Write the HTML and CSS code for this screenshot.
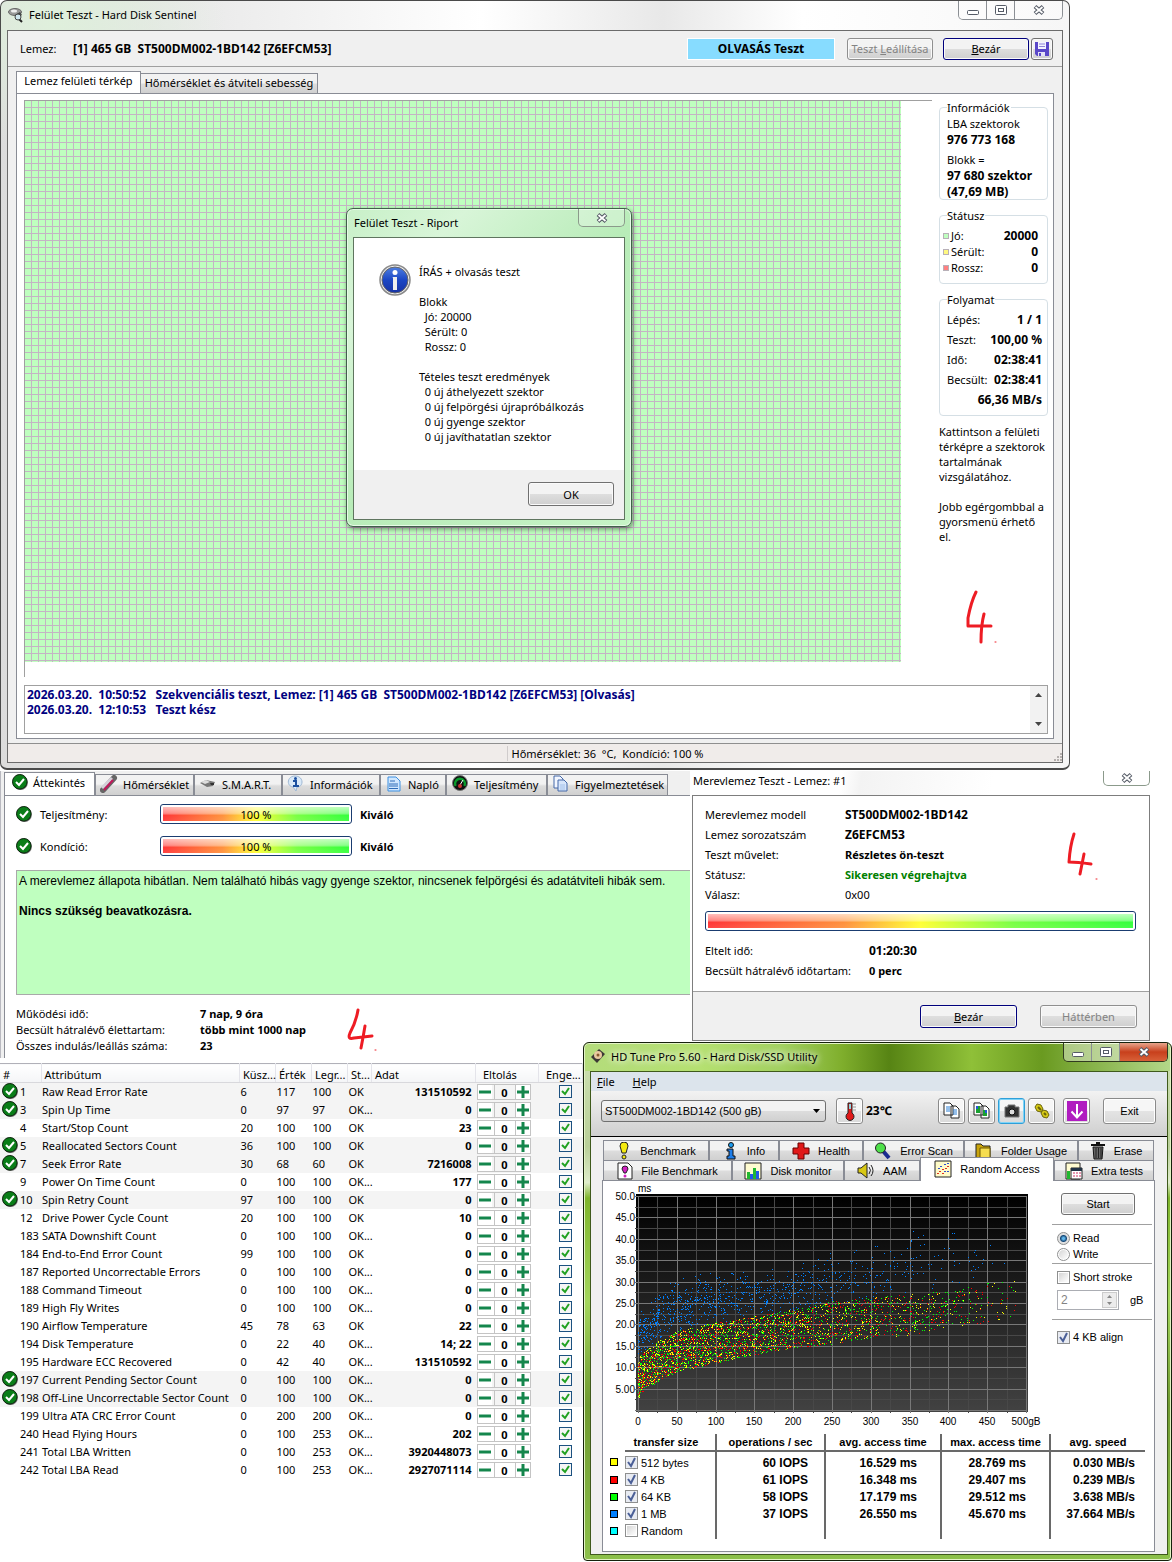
FILE: index.html
```html
<!DOCTYPE html>
<html lang="hu">
<head>
<meta charset="utf-8">
<title>Felület Teszt - Hard Disk Sentinel</title>
<link rel="stylesheet" href="styles.css">
</head>
<body>
<svg class="defs" aria-hidden="true">
  <symbol id="ok" viewBox="0 0 16 16"><circle cx="8.600" cy="8.800" r="7.200" fill="#777"/><circle cx="7.800" cy="7.800" r="7.300" fill="#0a7d18" stroke="#0b1f0b"/><path d="M4 8l3 3 5-6" fill="none" stroke="#fff" stroke-width="2"/></symbol>
  <symbol id="x" viewBox="0 0 12 10"><path d="M2 1.500l8 7M10 1.500l-8 7" stroke="#555b66" stroke-width="4"/><path d="M2.500 2l7 6M9.500 2l-7 6" stroke="#fff" stroke-width="1.800"/></symbol>
  <symbol id="min" viewBox="0 0 12 10"><rect x=".5" y="5.500" width="11" height="4" rx="1" fill="#fff" stroke="#555b66"/></symbol>
  <symbol id="max" viewBox="0 0 12 10"><rect x=".5" y=".5" width="11" height="9" rx="1" fill="#fff" stroke="#555b66"/><rect x="3.500" y="3.500" width="5" height="3" fill="#fff" stroke="#555b66"/></symbol>
  <symbol id="disk" viewBox="0 0 16 16"><ellipse cx="7" cy="5" rx="6.500" ry="3.500" fill="#999" stroke="#666"/><ellipse cx="6" cy="4" rx="3" ry="1.500" fill="#eee"/><path d="M7 8l5-3 2 3-3 2z" fill="#444"/></symbol>
</svg>

<main class="desktop">
<section class="win sentinel">
  <header class="titlebar">
    <svg width="16" height="16"><use href="#disk"/><path d="M9 10l5 5" stroke="#222" stroke-width="2"/><circle cx="10" cy="10" r="3" fill="#cfe6ef" stroke="#444"/></svg>
    <h1>Felület Teszt - Hard Disk Sentinel</h1>
    <div class="caption">
      <button aria-label="Minimize"><svg width="12" height="10"><use href="#min"/></svg></button>
      <button aria-label="Maximize"><svg width="12" height="10"><use href="#max"/></svg></button>
      <button class="wide" aria-label="Close"><svg width="12" height="10"><use href="#x"/></svg></button>
    </div>
  </header>
  <div class="client">
    <div class="diskbar">
      <span class="lbl">Lemez:</span><b class="pre">[1] 465 GB  ST500DM002-1BD142 [Z6EFCM53]</b>
      <b class="mode">OLVASÁS Teszt</b>
      <button class="btn" disabled>Teszt <u>L</u>eállítása</button>
      <button class="btn primary"><u>B</u>ezár</button>
      <button class="btn save" aria-label="Mentés"><svg width="16" height="16"><path d="M1 1h14v14H3l-2-2z" fill="#5a48c8"/><path d="M4 1h8v7H4z" fill="#f4f4ff"/><path d="M5 3h6M5 5.500h6" stroke="#8f86d8"/><path d="M4 11h7v4H4z" fill="#e4e2f6"/><path d="M5 12h2v3H5z" fill="#5a48c8"/></svg></button>
    </div>
    <div class="tabs main-tabs"><button class="tab on">Lemez felületi térkép</button><button class="tab">Hőmérséklet és átviteli sebesség</button></div>
    <div class="page">
      <div class="map-row">
        <div class="map"><div class="blocks"></div>
          <section class="report">
            <header><h2>Felület Teszt - Riport</h2><button class="xbtn" aria-label="Close"><svg width="12" height="10"><use href="#x"/></svg></button></header>
            <div class="report-client">
              <div class="report-msg">
                <svg width="32" height="32" viewBox="0 0 32 32"><defs><linearGradient id="bl" x2="0" y2="1"><stop stop-color="#4f7fe0"/><stop offset=".5" stop-color="#1b46c4"/><stop offset="1" stop-color="#1733a4"/></linearGradient></defs><circle cx="16" cy="16" r="15" fill="#f2f2f2" stroke="#888" stroke-width="1.500"/><circle cx="16" cy="16" r="13" fill="url(#bl)" stroke="#666"/><circle cx="16" cy="8.500" r="2.500" fill="#fff"/><path d="M13.500 13h4.500v13h-4V14z" fill="#eee"/></svg>
                <p class="pre">ÍRÁS + olvasás teszt

Blokk
  Jó: 20000
  Sérült: 0
  Rossz: 0

Tételes teszt eredmények
  0 új áthelyezett szektor
  0 új felpörgési újrapróbálkozás
  0 új gyenge szektor
  0 új javíthatatlan szektor</p>
              </div>
              <footer><button class="btn ok">OK</button></footer>
            </div>
          </section>
        </div>
        <aside class="side">
          <fieldset class="info"><legend>Információk</legend>LBA szektorok<br><b>976 773 168</b><div class="blk">Blokk =<br><b>97 680 szektor<br>(47,69 MB)</b></div></fieldset>
          <fieldset class="status"><legend>Státusz</legend>
            <div class="kv"><i class="sw good"></i>Jó:<b>20000</b></div>
            <div class="kv"><i class="sw weak"></i>Sérült:<b>0</b></div>
            <div class="kv"><i class="sw bad"></i>Rossz:<b>0</b></div></fieldset>
          <fieldset class="progress"><legend>Folyamat</legend>
            <div class="kv">Lépés:<b>1 / 1</b></div><div class="kv">Teszt:<b>100,00 %</b></div><div class="kv">Idő:<b>02:38:41</b></div><div class="kv">Becsült:<b>02:38:41</b></div><div class="kv"><b>66,36 MB/s</b></div></fieldset>
          <p>Kattintson a felületi<br>térképre a szektorok<br>tartalmának<br>vizsgálatához.</p>
          <p>Jobb egérgombbal a<br>gyorsmenü érhető<br>el.</p>
          <svg class="hand" width="32" height="56" viewBox="0 0 32 56"><path d="M10 2Q5 12 2 28v8l8 0 15 0M18 24Q15 35 15 52" /><path class="dot" d="M29 52h1"/></svg>
        </aside>
      </div>
      <div class="log"><textarea readonly aria-label="Napló">2026.03.20.  10:50:52   Szekvenciális teszt, Lemez: [1] 465 GB  ST500DM002-1BD142 [Z6EFCM53] [Olvasás]
2026.03.20.  12:10:53   Teszt kész</textarea>
        <div class="scroll"><button aria-label="Fel"><svg width="7" height="4"><path d="M0 4l3.500-4L7 4z" fill="#444"/></svg></button><button aria-label="Le"><svg width="7" height="4"><path d="M0 0h7L3.500 4z" fill="#444"/></svg></button></div></div>
    </div>
    <footer class="statusbar"><span class="pre">Hőmérséklet: 36  °C,  Kondíció: 100 %</span><svg width="10" height="10"><path d="M8 2h2M8 5h2M8 8h2M5 5h2M5 8h2M2 8h2" stroke="#b5b0ae" stroke-width="2"/></svg></footer>
  </div>
</section>

<div class="middle">
<section class="overview">
  <div class="tabs ov-tabs">
    <button class="tab on"><svg width="16" height="16"><use href="#ok"/></svg>Áttekintés</button>
    <button class="tab"><svg width="18" height="18"><path d="M3 15L14 3" stroke="#666" stroke-width="6" stroke-linecap="round"/><path d="M2 13L12 3" stroke="#d4d0d8" stroke-width="3"/><path d="M4 15L13 5" stroke="#c2185b" stroke-width="2"/></svg>Hőmérséklet</button>
    <button class="tab"><svg width="18" height="16"><path d="M1 7l6-3 9 2-2 4-6 1z" fill="#777"/><path d="M2 6l5-2 4 2-5 2z" fill="#ddd"/><path d="M11 7h4v2h-3z" fill="#333"/></svg>S.M.A.R.T.</button>
    <button class="tab"><svg width="18" height="18"><path d="M8 1c9 0 9 11 2 11l-1 4-3-4C-1 11 0 1 8 1z" fill="#d9e9f8" stroke="#9fb8d4"/><path d="M6 6h3v5M6 11h6" fill="none" stroke="#1a4fa0" stroke-width="2"/><circle cx="8.500" cy="3.500" r="1.500" fill="#1a4fa0"/></svg>Információk</button>
    <button class="tab"><svg width="18" height="16"><path d="M3 1h8l4 4v10H3z" fill="#cfe7ff" stroke="#3d8fe0"/><path d="M5 5h5M4 8h9M4 10h9M4 12.500h9" stroke="#2f6db8"/></svg>Napló</button>
    <button class="tab"><svg width="18" height="18"><circle cx="9" cy="8" r="7.500" fill="#111" stroke="#777"/><path d="M4.500 11a5 5 0 1 1 9 0" fill="none" stroke="#0a9c2c" stroke-width="2.500"/><path d="M9 10l3-5" stroke="#fff"/><circle cx="9" cy="11" r="2" fill="#c33"/></svg>Teljesítmény</button>
    <button class="tab"><svg width="18" height="18"><path d="M2 1h6l3 3v9H2z" fill="#f2f6ff" stroke="#4468a8"/><path d="M6 5h6l3 3v8H6z" fill="#d6e5fb" stroke="#4468a8"/><path d="M8 10h5M8 12h5M8 14h5" stroke="#a5c2ea"/></svg>Figyelmeztetések</button>
  </div>
  <div class="ov-body">
    <div class="health"><svg width="16" height="16"><use href="#ok"/></svg><span>Teljesítmény:</span><div class="bar">100 %</div><b>Kiváló</b></div>
    <div class="health"><svg width="16" height="16"><use href="#ok"/></svg><span>Kondíció:</span><div class="bar">100 %</div><b>Kiváló</b></div>
    <div class="verdict"><p>A merevlemez állapota hibátlan. Nem található hibás vagy gyenge szektor, nincsenek felpörgési és adatátviteli hibák sem.</p><b>Nincs szükség beavatkozásra.</b></div>
    <dl class="stats"><dt>Működési idő:</dt><dd>7 nap, 9 óra</dd><dt>Becsült hátralévő élettartam:</dt><dd>több mint 1000 nap</dd><dt>Összes indulás/leállás száma:</dt><dd>23</dd></dl>
    <svg class="hand mark-ov" width="32" height="48" viewBox="0 0 32 48"><path d="M11 2Q9 14 3 25q-3 7 4 5l18-2M18 18q-2 12-4 22"/><path class="dot" d="M28 42h1"/></svg>
  </div>
</section>
<section class="selftest">
  <header><h2>Merevlemez Teszt - Lemez: #1</h2><button class="xbtn" aria-label="Close"><svg width="12" height="10"><use href="#x"/></svg></button></header>
  <div class="st-client">
    <dl class="st-list"><dt>Merevlemez modell</dt><dd class="code">ST500DM002-1BD142</dd><dt>Lemez sorozatszám</dt><dd class="code">Z6EFCM53</dd><dt>Teszt művelet:</dt><dd>Részletes ön-teszt</dd><dt>Státusz:</dt><dd class="done">Sikeresen végrehajtva</dd><dt>Válasz:</dt><dd class="plain">0x00</dd></dl>
    <div class="bar"></div>
    <dl class="st-list st-time"><dt>Eltelt idő:</dt><dd class="code">01:20:30</dd><dt>Becsült hátralévő időtartam:</dt><dd>0 perc</dd></dl>
    <footer><button class="btn primary"><u>B</u>ezár</button><button class="btn" disabled>Háttérben</button></footer>
    <svg class="hand mark-st" width="32" height="50" viewBox="0 0 32 50"><path d="M7 2Q3 14 2 30q8 0 22 2M17 22l-4 20"/><path class="dot" d="M29 47h1"/></svg>
  </div>
</section>
</div>

<div class="bottom">
<table class="smart">
  <colgroup><col class="c-id"><col><col class="c-num"><col class="c-num"><col class="c-num"><col class="c-st"><col class="c-data"><col class="c-off"><col class="c-en"></colgroup>
  <thead><tr><th>#</th><th>Attribútum</th><th>Küsz...</th><th>Érték</th><th>Legr...</th><th>St...</th><th>Adat</th><th class="in">Eltolás</th><th class="in">Enge...</th></tr></thead>
  <tbody id="smart"></tbody>
</table>

<section class="hdtune">
  <header class="ht-title"><svg width="16" height="16"><path d="M1 9l8-8 6 5-8 9z" fill="#3c3835"/><circle cx="8" cy="7" r="4" fill="#e8c9a0"/><circle cx="8" cy="7" r="1.500" fill="#8a5a30"/></svg><h2>HD Tune Pro 5.60 - Hard Disk/SSD Utility</h2>
    <div class="caption"><button aria-label="Minimize"><svg width="12" height="10"><use href="#min"/></svg></button><button aria-label="Maximize"><svg width="12" height="10"><use href="#max"/></svg></button><button class="wide red" aria-label="Close"><svg width="12" height="10"><use href="#x"/></svg></button></div></header>
  <div class="ht-client">
    <nav class="menu"><a href="#file"><u>F</u>ile</a><a href="#help"><u>H</u>elp</a></nav>
    <div class="toolbar">
      <select class="drive" aria-label="Drive"><option>ST500DM002-1BD142 (500 gB)</option></select>
      <button class="tool" aria-label="Temperature"><svg width="16" height="20"><path d="M6 2h4v10a4 4 0 1 1-4 0z" fill="#e01818" stroke="#222"/><path d="M7 3h2v5H7z" fill="#8fd6e0"/><path d="M11 3h3M11 6h3M11 9h3" stroke="#999"/></svg></button>
      <b class="temp">23℃</b>
      <button class="tool push" aria-label="Copy"><svg width="18" height="18"><path d="M1 1h6l3 3v9H1zM8 4h5l3 3v9H8z" fill="#fff" stroke="#222"/><path d="M3 5h4M3 7h4M3 9h4M10 8h4M10 10h4M10 12h4" stroke="#2a7fd4"/></svg></button>
      <button class="tool" aria-label="Copy image"><svg width="18" height="18"><path d="M1 1h6l3 3v9H1zM8 4h5l3 3v9H8z" fill="#fff" stroke="#222"/><path d="M3 4h4v7H3zM10 8h4v6h-4z" fill="#18a030"/><path d="M3 4h2v3H3zM12 8h2v3h-2z" fill="#2458d8"/></svg></button>
      <button class="tool focus" aria-label="Screenshot"><svg width="18" height="18"><path d="M2 5h3V3h7v2h4v10H2z" fill="#333" stroke="#777"/><circle cx="9" cy="10" r="3" fill="#ddd" stroke="#111"/></svg></button>
      <button class="tool" aria-label="Options"><svg width="18" height="18"><path d="M2 5l2-3 4 1 2 4-2 3-4-1zM8 11l2-3 4 1 2 4-2 3-4-1z" fill="#d6c914" stroke="#6b640a"/><path d="M5 5l3 3M11 11l2 2" stroke="#6b640a" stroke-width="2"/></svg></button>
      <button class="tool gap" aria-label="Save"><svg width="20" height="20"><path d="M0 0h20v20H0z" fill="#b01cc0"/><path d="M10 3v13M4.500 10.500l5.500 6 5.500-6" fill="none" stroke="#fff" stroke-width="2"/></svg></button>
      <button class="tool exit">Exit</button>
    </div>
    <div class="ht-body">
      <div class="httabs row1">
        <button class="tab"><svg width="16" height="18"><path d="M4 4a4 4 0 0 1 8 0l-2 7H6z" fill="#f4ea10" stroke="#222"/><circle cx="8" cy="15" r="2" fill="#f4ea10" stroke="#222"/></svg>Benchmark</button>
        <button class="tab"><svg width="16" height="18"><circle cx="8" cy="3" r="2.500" fill="#1c9cf0" stroke="#111"/><path d="M4 7h6v7h2v3H4v-3h2V9H4z" fill="#1c7ce8" stroke="#111"/></svg>Info</button>
        <button class="tab"><svg width="18" height="18"><path d="M6 1h6v5h5v6h-5v5H6v-5H1V6h5z" fill="#e01818" stroke="#600"/></svg>Health</button>
        <button class="tab"><svg width="18" height="18"><path d="M9 9l6 7" stroke="#1c2c90" stroke-width="4"/><circle cx="6.500" cy="6" r="5" fill="#4fe04a" stroke="#222"/></svg>Error Scan</button>
        <button class="tab"><svg width="18" height="18"><path d="M1 2h5l2 2h7v12H1z" fill="#c9a40c" stroke="#222"/><path d="M5 6h10v10H5z" fill="#f5dd50" stroke="#6a5600"/></svg>Folder Usage</button>
        <button class="tab"><svg width="16" height="18"><path d="M1 3h14M6 1h4" stroke="#111" stroke-width="2"/><path d="M3 5h10l-1 12H4z" fill="#666" stroke="#111"/><path d="M6 6v10M8.500 6v10M11 6v10" stroke="#222"/></svg>Erase</button>
      </div>
      <div class="httabs row2">
        <button class="tab"><svg width="16" height="18"><path d="M1 1h10l4 4v12H1z" fill="#fff" stroke="#222"/><path d="M5 7a3 3 0 0 1 6 0l-2 4H7z" fill="#d020c0" stroke="#222"/><circle cx="8" cy="14" r="1.500" fill="#d020c0"/></svg>File Benchmark</button>
        <button class="tab"><svg width="18" height="18"><path d="M1 1h16v16H1z" fill="#fffbd0" stroke="#222"/><path d="M3 10h3v7H3zM9 6h3v11H9z" fill="#20b830"/><path d="M6 12h3v5H6zM12 9h3v8h-3z" fill="#2458e8"/></svg>Disk monitor</button>
        <button class="tab"><svg width="18" height="18"><path d="M1 6h3l6-5v15l-6-5H1z" fill="#d8c814" stroke="#222"/><path d="M12 5q3 3 0 7M14 3q4 6 0 11" fill="none" stroke="#222"/></svg>AAM</button>
        <button class="tab on"><svg width="18" height="18"><path d="M1 1h16v16H1z" fill="#fffbc8" stroke="#222"/><path d="M3 13.500h2M5 11.500h2M8 9.500h2M8 13.500h2M11 8.500h2M13 6.500h2" stroke="#e03020"/><path d="M4 8.500h2M10 4.500h2M13 11.500h2M10 11.500h2M13 3.500h2M6 6.500h2" stroke="#3050d0"/></svg>Random Access</button>
        <button class="tab"><svg width="18" height="18"><path d="M1 1h14v16H1z" fill="#fffbd0" stroke="#222"/><path d="M2 9h3v8H2z" fill="#20b830"/><path d="M6 6h11v11H6z" fill="#fff" stroke="#222"/><path d="M6 6h11v3H6z" fill="#234"/><path d="M8 11h8M8 14h8" stroke="#d03060" stroke-dasharray="2 1"/></svg>Extra tests</button>
      </div>
      <div class="ht-page">
        <div class="ht-top">
          <svg id="chart" class="chart" width="445" height="252" viewBox="603 1181 445 252" role="img" aria-label="Random access"></svg>
          <div class="opts">
            <button class="btn start">Start</button>
            <hr>
            <label><input type="radio" name="rw" checked>Read</label>
            <label><input type="radio" name="rw">Write</label>
            <hr>
            <label class="ss"><input type="checkbox">Short stroke</label>
            <div class="spin"><span><input type="text" value="2" disabled aria-label="Short stroke size"><i class="arrows"><svg width="5" height="3"><path d="M0 3l2.500-3L5 3z" fill="#888"/></svg><svg width="5" height="3"><path d="M0 0h5L2.500 3z" fill="#888"/></svg></i></span>gB</div>
            <hr>
            <label class="al"><input type="checkbox" checked>4 KB align</label>
          </div>
        </div>
        <table class="results">
          <colgroup><col class="r0"><col class="r1"><col class="r2"><col class="r3"><col class="r2"><col></colgroup>
          <thead><tr><td></td><th>transfer size</th><th>operations / sec</th><th>avg. access time</th><th>max. access time</th><th>avg. speed</th></tr></thead>
          <tbody>
            <tr><td><i class="key y"></i></td><td><label><input type="checkbox" checked>512 bytes</label></td><td>60 IOPS</td><td>16.529 ms</td><td>28.769 ms</td><td>0.030 MB/s</td></tr>
            <tr><td><i class="key r"></i></td><td><label><input type="checkbox" checked>4 KB</label></td><td>61 IOPS</td><td>16.348 ms</td><td>29.407 ms</td><td>0.239 MB/s</td></tr>
            <tr><td><i class="key g"></i></td><td><label><input type="checkbox" checked>64 KB</label></td><td>58 IOPS</td><td>17.179 ms</td><td>29.512 ms</td><td>3.638 MB/s</td></tr>
            <tr><td><i class="key b"></i></td><td><label><input type="checkbox" checked>1 MB</label></td><td>37 IOPS</td><td>26.550 ms</td><td>45.670 ms</td><td>37.664 MB/s</td></tr>
            <tr><td><i class="key c"></i></td><td><label><input type="checkbox">Random</label></td><td></td><td></td><td></td><td></td></tr>
          </tbody>
        </table>
      </div>
    </div>
  </div>
</section>
</div>
</main>
<script src="app.js"></script>
</body>
</html>
```
FILE: styles.css
```css
* { box-sizing: border-box; }
body { margin: 0; background: #fff; color: #000; font: 11px/15px "Noto Sans", "Open Sans", sans-serif; }
h1, h2, p, dl, dd, fieldset { margin: 0; padding: 0; font-size: inherit; font-weight: normal; }
button, input, select, textarea { font: inherit; color: inherit; margin: 0; padding: 0; }
svg { display: block; flex: none; }
.defs { position: absolute; width: 0; height: 0; }
.pre { white-space: pre; }
.desktop { min-width: 1100px; overflow: hidden; }

/* shared controls */
.btn { height: 22px; border: 1px solid #707070; border-radius: 3px; background: linear-gradient(#f3f3f3 0 48%, #dedede 50%, #cfcfcf); white-space: nowrap; box-shadow: inset 0 0 0 1px #fafafa; }
.btn:disabled { color: #838383; border-color: #8f8f8f; }
.btn.primary { border-color: #00007c; }
.caption { display: flex; align-self: flex-start; margin-left: auto; height: 19px; border: 1px solid #8b8f94; border-top: 0; border-radius: 0 0 5px 5px; overflow: hidden; }
.caption button { width: 28px; border: 0; border-right: 1px solid #8b8f94; background: #ffffff66; display: grid; place-items: center; }
.caption .wide { width: 47px; border-right: 0; }
.xbtn { width: 47px; height: 18px; border: 1px solid #8b9a8b; border-top: 0; border-radius: 0 0 5px 5px; background: #ffffff44; display: grid; place-items: center; align-self: flex-start; margin-left: auto; }
.tabs { display: flex; align-items: flex-end; }
.tab { border: 1px solid #898c95; background: linear-gradient(#f2f2f2 0 45%, #dcdcdc 55%, #d0d0d0); white-space: nowrap; }
.tab.on { background: #fff; border-bottom-color: #fff; }
.bar { height: 20px; border: 1px solid #1a3c70; border-radius: 3px; padding: 2px; text-align: center; line-height: 15px; background: linear-gradient(#ffffffb0 0, #ffffff70 45%, #ffffff10 60%, #ffffff20 100%) content-box, linear-gradient(90deg, #ff2a2a, #ff8a30 32%, #ffff28 50%, #70ff38 72%, #28ff30) content-box #fff; }
.hand { fill: none; stroke: #ee1c24; stroke-width: 3; stroke-linecap: round; stroke-linejoin: round; }
.hand .dot { stroke-width: 1; }

/* surface test window */
.sentinel { margin-right: 102px; height: 770px; border: 1px solid #4a4a4a; border-bottom-width: 2px; border-radius: 7px; padding: 0 6px 5px 6px; background: radial-gradient(ellipse at 5% 3%, #dff0dc, transparent 12%), linear-gradient(90deg, #dcdcdc, #efefef 25%, #fff 45%, #e8e8e8 62%, #fff 75%, #f6f6f6); display: flex; flex-direction: column; }
.titlebar { display: flex; height: 29px; align-items: center; gap: 5px; padding: 0 0 2px 1px; }
.client { flex: 1; display: flex; flex-direction: column; border: 1px solid #6b6b6b; background: #f0f0f0; }
.diskbar { display: flex; align-items: center; height: 36px; padding: 0 9px 0 12px; border-bottom: 1px solid #a0a0a0; }
.diskbar b { font-size: 12px; }
.diskbar .lbl { width: 53px; }
.mode { margin-left: auto; margin-right: 12px; width: 148px; line-height: 20px; text-align: center; background: #87dcff; border: 1px solid #fff; }
.diskbar .btn { width: 86px; margin-right: 10px; }
.diskbar .primary { margin-right: 2px; }
.diskbar .save { width: 22px; margin-right: 0; padding-left: 2px; }
.main-tabs { padding: 4px 8px 0; }
.main-tabs .tab { height: 20px; width: 177px; padding-bottom: 2px; border-bottom: 0; border-left: 0; }
.main-tabs .on { width: 125px; height: 22px; padding-bottom: 4px; border-left: 1px solid #898c95; }
.page { flex: 1; margin: 0 8px 4px; border: 1px solid #898c95; background: #fff; padding: 6px 5px 4px 7px; display: flex; flex-direction: column; gap: 8px; }
.map-row { flex: 1; display: flex; gap: 7px; }
.map { position: relative; flex: 1; border: 1px solid #a0a0a0; border-width: 1px 0 0 1px; }
.blocks { height: 561px; margin-right: 31px; background: repeating-linear-gradient(90deg, transparent 0 6px, #c4b4c4 6px 7px), repeating-linear-gradient(#bfffbf 0 6px, #c4b4c4 6px 7px); }
.side { width: 109px; }
.side fieldset { border: 1px solid #d5dfe5; border-radius: 4px; padding: 1px 5px 0 7px; line-height: 16px; }
.side b { font-size: 12px; }
.side legend { line-height: 15px; padding: 0 1px 0 0; }
.info { height: 100px; }
.blk { margin-top: 4px; white-space: nowrap; }
.side .status { height: 76px; margin-top: 8px; padding: 5px 9px 0 3px; }
.status legend { margin-left: 4px; }
.side .progress { height: 124px; margin-top: 8px; padding-top: 3px; }
.progress .kv { line-height: 20px; }
.kv { display: flex; align-items: center; white-space: nowrap; }
.kv b { margin-left: auto; }
.sw { width: 6px; height: 6px; border: 1px solid #b8b0b8; margin-right: 2px; }
.good { background: #bfffbf; } .weak { background: #fff880; } .bad { background: #ff8080; }
.side p { margin: 8px 0 15px; white-space: nowrap; }
.side .hand { margin: 46px 0 0 27px; }
.side p + p { margin-top: 0; }
.log { display: flex; height: 49px; border: 1px solid #a0a0a0; }
.log textarea { flex: 1; border: 0; resize: none; overflow: hidden; padding: 1px 2px; font-size: 12px; font-weight: bold; color: #000080; background: #fff; outline: 0; }
.scroll { width: 17px; background: #f2f2f2; display: flex; flex-direction: column; justify-content: space-between; }
.scroll button { height: 18px; border: 0; background: none; display: grid; place-items: center; }
.statusbar { height: 19px; border-top: 1px solid #8f8f8f; background: #f0ecea; display: flex; align-items: center; justify-content: space-between; padding-left: 47.300%; }
.statusbar span { border-left: 1px solid #d0cccc; padding-left: 4px; }
.statusbar svg { align-self: flex-end; }

/* report box lies over the block map */
.report { position: absolute; left: 321px; top: 107px; width: 286px; height: 319px; border: 1px solid #40604a; border-radius: 7px; background: linear-gradient(135deg, #c8f0c8, #d8f5d8 20%, #b8ecb8 50%, #c6f3c6); box-shadow: inset 0 0 0 1px #e6fbe6, 1px 2px 5px #00000077; padding: 0 6px 6px; display: flex; flex-direction: column; }
.report header { display: flex; height: 28px; align-items: center; padding: 0 0 2px 1px; }
.report-client { flex: 1; border: 1px solid #5f755f; background: #fff; display: flex; flex-direction: column; }
.report-msg { flex: 1; display: flex; gap: 8px; padding: 26px 0 0 25px; }
.report footer { height: 49px; background: #f0f0f0; display: flex; justify-content: flex-end; padding: 12px 10px; }
.report .ok { width: 86px; height: 24px; }

/* overview and self test */
.middle { display: grid; grid-template-columns: 690fr 482fr; height: 291px; padding-top: 1px; }
.overview { height: 287px; border-left: 1px solid #b9b9c0; padding-left: 3px; background: #f0f0f0; display: flex; flex-direction: column; min-width: 0; }
.ov-tabs { height: 24px; }
.ov-tabs .tab { display: flex; align-items: center; gap: 5px; height: 21px; padding: 0 3px 2px 4px; border-bottom: 0; width: 99px; }
.ov-tabs .on { width: 91px; height: 23px; padding-bottom: 4px; padding-left: 7px; }
.ov-tabs .tab:nth-child(3) { width: 88px; } .ov-tabs .tab:nth-child(4) { width: 98px; }
.ov-tabs .tab:nth-child(5) { width: 66px; } .ov-tabs .tab:nth-child(6) { width: 101px; }
.ov-tabs .tab:nth-child(7) { width: 121px; }
.ov-body { position: relative; flex: 1; background: #fff; border-left: 1px solid #898c95; border-top: 1px solid #898c95; padding: 8px 0 0 11px; }
.health { display: grid; grid-template-columns: 24px 120px 192px 1fr; align-items: center; height: 20px; margin-bottom: 12px; }
.health b { padding-left: 8px; }
.verdict { margin-top: 14px; height: 125px; border: 1px solid #a9a9a9; border-right: 0; background: #bfffbf; padding: 3px 2px; font: 12px/15px "Liberation Sans", Arial, sans-serif; white-space: nowrap; overflow: hidden; }
.verdict b { display: block; margin-top: 15px; }
.stats { display: grid; grid-template-columns: 184px 1fr; line-height: 16px; padding-top: 11px; }
.stats dd { font-weight: bold; }
.mark-ov { position: absolute; left: 342px; bottom: 2px; }
.selftest { height: 270px; margin-right: 22px; display: flex; flex-direction: column; background: linear-gradient(100deg, #fff 0 30%, #f3f3f3 34%, #fff 60%); padding-left: 2px; }
.selftest header { display: flex; flex: none; height: 24px; line-height: 19px; padding-left: 1px; }
.selftest .xbtn { height: 15px; }
.st-client { position: relative; flex: 1; border: 1px solid #7d7d7d; display: flex; flex-direction: column; background: #fff; }
.st-list { display: grid; grid-template-columns: 140px 1fr; line-height: 20px; padding: 9px 12px 6px; }
.st-list dd { font-weight: bold; }
.st-list .code { font-size: 12px; }
.st-list .done { color: #008000; } .st-list .plain { font-weight: normal; }
.st-client .bar { margin: 0 13px 0 12px; }
.st-time { grid-template-columns: 164px 1fr; padding-top: 10px; }
.st-client footer { flex: 1; margin-top: 4px; border-top: 1px solid #a0a0a0; background: #f0f0f0; display: flex; justify-content: flex-end; gap: 23px; padding: 13px 12px 0; }
.st-client footer .btn { width: 97px; height: 23px; }
.mark-st { position: absolute; left: 374px; top: 36px; }

/* SMART table */
.bottom { display: grid; grid-template-columns: 583fr 589fr; align-items: start; }
.smart { table-layout: fixed; width: 100%; border-collapse: collapse; margin-top: 2px; border-top: 1px solid #b0b0b8; }
.smart th { font-weight: normal; text-align: left; height: 19px; padding: 2px 0 0 3px; border-right: 1px solid #e4e4ea; border-bottom: 1px solid #d8d8dc; background: linear-gradient(#fff, #f4f5f7); white-space: nowrap; }
.smart .in { padding-left: 7px; }
.smart td { height: 18px; padding: 0 0 0 1px; white-space: nowrap; line-height: 17px; }
.c-id { width: 41px; } .c-num { width: 36px; } .c-st { width: 24px; } .c-data { width: 104px; } .c-off { width: 63px; } .c-en { width: 44px; }
.smart tr.crit td { background: #f4f4f4; }
.smart .id { padding-left: 2px; }
.id div { display: flex; } .id span { margin-left: 2px; } .id .none { width: 16px; }
.smart .data { text-align: right; font-weight: bold; padding-right: 4px; }
.step { display: grid; grid-template-columns: 16px 22px 16px; width: 54px; height: 16px; border: 1px solid #c4c4c4; align-items: center; font-weight: bold; text-align: center; }
.step button { border: 0; background: #fff; height: 14px; width: 14px; display: grid; place-items: center; }
.step span { border: 1px solid #c4c4c4; border-width: 0 1px; height: 14px; line-height: 15px; }

/* tick boxes and radios */
input[type=checkbox], input[type=radio] { appearance: none; border: 1px solid #8e8f8f; background: linear-gradient(135deg, #d5d5d5, #fff) content-box #fff; padding: 1px; }
input[type=radio] { border-radius: 50%; }
input[type=radio]:checked { background: radial-gradient(circle, #5fb4e8 0 1px, #154878 3px, #e0e0e0 4px); }
.smart td input[type=checkbox] { display: block; width: 13px; height: 13px; margin-left: 19px; border-color: #1c5180; background: url("data:image/svg+xml,%3Csvg xmlns='http://www.w3.org/2000/svg' width='11' height='11'%3E%3Cpath d='M2 5l3 3 4-6' fill='none' stroke='%2321a121' stroke-width='2'/%3E%3C/svg%3E") no-repeat center #f6f6f6; }

/* HD Tune */
.hdtune { margin: -19px 0 0 0; height: 519px; position: relative; font: 11px/14px "Liberation Sans", Arial, sans-serif; border: 1px solid #16210c; border-radius: 6px 6px 4px 4px; padding: 0 3px 5px 6px; background: linear-gradient(90deg, #b4dc7c, #b5e070 20%, #a2d060 34%, #7fae2c 44%, #578414 52%, #8fc038 66%, #6a9a20 78%, #b4d88a) top / 100% 28px no-repeat, linear-gradient(#cfe2b4, #b9cf98 20%, #dfeccb 27%, #7fb52c 30%, #a4d65c 50%, #6f9a30 70%, #8cc04a); box-shadow: inset 0 0 0 1px #e2f3c4; display: flex; flex-direction: column; }
.ht-title { display: flex; align-items: center; height: 28px; gap: 5px; padding-bottom: 2px; font: 11px/15px "Noto Sans", sans-serif; }
.ht-title h2 { text-shadow: 0 0 6px #fff, 0 0 8px #fff; }
.ht-title .caption { border-color: #303a20; }
.ht-title .red { background: linear-gradient(#e8a58c, #c8401c 50%, #d86038); }
.ht-client { flex: 1; border: 1px solid #3f5a1c; background: #f0f0f0; display: flex; flex-direction: column; }
.menu { height: 19px; background: #dce4ec; display: flex; gap: 18px; padding: 2px 6px; font: 11px/15px "Noto Sans", sans-serif; }
.menu a { color: #000; text-decoration: none; }
.toolbar { height: 46px; border-bottom: 1px solid #000; background: linear-gradient(#f2f2f2, #cfcfcf); display: flex; align-items: center; padding: 0 11px 6px 10px; }
.drive { appearance: none; width: 225px; height: 22px; padding: 0 3px; border: 1px solid #707070; border-radius: 3px; background: url("data:image/svg+xml,%3Csvg xmlns='http://www.w3.org/2000/svg' width='7' height='4'%3E%3Cpath d='M0 0h7L3.500 4z'/%3E%3C/svg%3E") right 5px center no-repeat, linear-gradient(#f2f2f2 0 48%, #dddddd 50%, #d0d0d0); margin-right: 10px; }
.tool { width: 27px; height: 26px; border: 1px solid #8a8a8a; border-radius: 3px; background: linear-gradient(#f6f6f6 0 48%, #e4e4e4 50%, #dadada); display: grid; place-items: center; margin-right: 3px; box-shadow: inset 0 0 0 1px #fff; }
.temp { font: bold 12px/14px "Noto Sans", "Noto Sans CJK JP", sans-serif; }
.push { margin-left: auto; }
.focus { border-color: #2f9fd8; box-shadow: inset 0 0 0 1px #7fd4f8; }
.gap { margin-left: 5px; margin-right: 13px; }
.exit { width: 53px; margin-right: 0; }
.ht-body { flex: 1; padding: 3px 12px 2px 11px; display: flex; flex-direction: column; }
.httabs { display: grid; margin: 0 1px; }
.row1 { height: 20px; grid-template-columns: 106fr 70fr 84fr 101fr 114fr 76fr; }
.row2 { height: 20px; grid-template: 20px / 129fr 112fr 76fr 134fr 100fr; align-items: end; }
.httabs .tab { display: flex; align-items: center; justify-content: center; gap: 8px; height: 20px; border-bottom: 0; overflow: hidden; }
.httabs .on { height: 24px; padding-bottom: 2px; position: relative; margin-bottom: -1px; }
.ht-page { flex: 1; border: 1px solid #898c95; background: #fff; }
.ht-top { display: flex; height: 252px; }
.chart text { font: 10px "Liberation Sans", Arial, sans-serif; }
.opts { flex: 1; padding: 12px 2px 0 4px; display: flex; flex-direction: column; }
.start { width: 74px; margin: 0 0 9px 9px; }
.opts hr { width: 100%; border: 0; border-top: 1px solid #a0a0a0; margin: 0 0 5px; }
.opts label { display: flex; align-items: center; gap: 3px; height: 16px; margin-left: 5px; }
.opts input[type=radio], .opts input[type=checkbox] { width: 13px; height: 13px; margin: 0; }
.opts label + hr { margin-top: 1px; }
.ss { margin-bottom: 5px; }
.spin { display: flex; align-items: center; gap: 11px; margin: 0 0 9px 5px; }
.spin span { display: flex; width: 62px; height: 20px; border: 1px solid #abadb3; padding: 1px; }
.spin input { width: 43px; border: 0; background: #fff; color: #838383; padding-left: 2px; font-size: 12px; }
.arrows { width: 15px; background: #ececec; border: 1px solid #ccc; display: flex; flex-direction: column; align-items: center; justify-content: space-around; }
.al { margin-top: 4px; }
.hdtune input[type=checkbox]:checked { background: url("data:image/svg+xml,%3Csvg xmlns='http://www.w3.org/2000/svg' width='11' height='11'%3E%3Cpath d='M2 5l3 4 4-8' fill='none' stroke='%234a5f97' stroke-width='2'/%3E%3C/svg%3E") no-repeat center #e8ebf2; }
.results { table-layout: fixed; width: calc(100% - 9px); border-collapse: collapse; margin-top: 1px; }
.r0 { width: 22px; } .r1 { width: 91px; } .r2 { width: 109px; } .r3 { width: 116px; }
.results th, .results td { padding: 0; height: 17px; white-space: nowrap; }
.results th { font-weight: bold; text-align: center; border-bottom: 2px solid #696969; }
.results th:nth-child(2) { padding-right: 8px; }
.results td:nth-child(n+3), .results th:nth-child(n+3) { border-left: 2px solid #696969; }
.results td:nth-child(n+3) { text-align: right; font-weight: bold; font-size: 12px; padding-right: 16px; }
.results td:nth-child(4), .results td:nth-child(5) { padding-right: 23px; }
.results td:last-child { padding-right: 10px; }
.results label { display: flex; align-items: center; gap: 3px; }
.results input { width: 13px; height: 13px; }
.results tbody tr:first-child td { height: 20px; padding-top: 2px; }
.key { display: block; width: 8px; height: 8px; border: 1px solid #000; margin-left: 7px; }
.y { background: #ff0; } .r { background: #f00; } .g { background: #0f0; } .b { background: #0080ff; } .c { background: #0ff; }
```
FILE: app.js
```js
const attributes = [
  [1, 'Raw Read Error Rate', 6, 117, 100, 'OK', '131510592', 1],
  [3, 'Spin Up Time', 0, 97, 97, 'OK...', '0', 1],
  [4, 'Start/Stop Count', 20, 100, 100, 'OK', '23', 0],
  [5, 'Reallocated Sectors Count', 36, 100, 100, 'OK', '0', 1],
  [7, 'Seek Error Rate', 30, 68, 60, 'OK', '7216008', 1],
  [9, 'Power On Time Count', 0, 100, 100, 'OK...', '177', 0],
  [10, 'Spin Retry Count', 97, 100, 100, 'OK', '0', 1],
  [12, 'Drive Power Cycle Count', 20, 100, 100, 'OK', '10', 0],
  [183, 'SATA Downshift Count', 0, 100, 100, 'OK...', '0', 0],
  [184, 'End-to-End Error Count', 99, 100, 100, 'OK', '0', 0],
  [187, 'Reported Uncorrectable Errors', 0, 100, 100, 'OK...', '0', 0],
  [188, 'Command Timeout', 0, 100, 100, 'OK...', '0', 0],
  [189, 'High Fly Writes', 0, 100, 100, 'OK...', '0', 0],
  [190, 'Airflow Temperature', 45, 78, 63, 'OK', '22', 0],
  [194, 'Disk Temperature', 0, 22, 40, 'OK...', '14; 22', 0],
  [195, 'Hardware ECC Recovered', 0, 42, 40, 'OK...', '131510592', 0],
  [197, 'Current Pending Sector Count', 0, 100, 100, 'OK...', '0', 1],
  [198, 'Off-Line Uncorrectable Sector Count', 0, 100, 100, 'OK...', '0', 1],
  [199, 'Ultra ATA CRC Error Count', 0, 200, 200, 'OK...', '0', 0],
  [240, 'Head Flying Hours', 0, 100, 253, 'OK...', '202', 0],
  [241, 'Total LBA Written', 0, 100, 253, 'OK...', '3920448073', 0],
  [242, 'Total LBA Read', 0, 100, 253, 'OK...', '2927071114', 0],
];
document.getElementById('smart').innerHTML = attributes.map(([id, name, thr, val, worst, st, data, crit]) => `
<tr class="${crit ? 'crit' : ''}"><td class="id"><div>${crit ? '<svg width="16" height="16"><use href="#ok"/></svg>' : '<i class="none"></i>'}<span>${id}</span></div></td>
<td>${name}</td><td>${thr}</td><td>${val}</td><td>${worst}</td><td>${st}</td><td class="data">${data}</td>
<td><div class="step"><button aria-label="-"><svg width="12" height="12"><path d="M0 6h12" stroke="#14864c" stroke-width="3"/></svg></button><span>0</span><button aria-label="+"><svg width="12" height="12"><path d="M0 6h12M6 0v12" stroke="#14864c" stroke-width="3"/></svg></button></div></td>
<td><input type="checkbox" checked aria-label="${name}"></td></tr>`).join('');

// Random access scatter plot: 0-500 gB across, 0-50 ms up.
const X0 = 638, X1 = 1026, Y0 = 1410, Y1 = 1196;
const px = g => Math.round(X0 + (X1 - X0) * g / 500);
const py = t => Math.round(Y0 - (Y0 - Y1) * t / 50);
let out = '<defs><linearGradient id="pg" x2="0" y2="1"><stop stop-color="#000"/><stop offset="1" stop-color="#424242"/></linearGradient></defs>';
out += '<rect x="636" y="1194" width="392" height="218" fill="url(#pg)"/><path d="M636 1194h392v3h-392z"/>';
let minor = '', major = '';
for (let i = 0; i <= 20; i++) {
  const x = px(i * 25) + 0.5, y = py(i * 2.5) + 0.5;
  const v = `M${x} 1196V${1413}`, h = `M635 ${y}H1027`;
  if (i % 2) minor += v + h; else major += v + h;
}
out += `<path d="${minor}" stroke="#484848"/><path d="${major}" stroke="#787878"/>`;

let seed = 77;
const rnd = () => (seed = (seed * 16807) % 2147483647) / 2147483647;
const curve = (pts, g) => {
  const step = 50, i = Math.min(pts.length - 2, Math.floor(g / step));
  return pts[i] + (pts[i + 1] - pts[i]) * (g - i * step) / step;
};
const low = [5, 9, 11, 13, 14.5, 15.5, 17, 17.5, 19.5, 20.5, 22];
const high = [14, 18.5, 20.5, 22, 23.5, 25.5, 26.5, 27, 28, 30, 31];
const blueLow = [14, 17, 19, 20, 21.5, 23, 24, 25, 26, 27, 30];
const blueHigh = [25, 31, 33, 33, 35, 37, 39, 42, 44, 43, 44];
const dots = [['#0080ff', 1750, blueLow, blueHigh], ['#f00', 1900, low, high], ['#0f0', 1900, low, high], ['#ff0', 1800, low, high]];
for (const [color, n, lo, hi] of dots) {
  let d = '';
  for (let i = 0; i < n; i++) {
    const blue = lo === blueLow;
    const g = 497 * Math.pow(rnd(), 1.1), a = curve(lo, g), b = curve(hi, g);
    // seeks get rarer towards the end of the disk
    if (rnd() < g / (blue ? 480 : 515)) continue;
    const dip = g < 30 ? (30 - g) / 12 : 0;
    const r = blue ? (rnd() + rnd()) / 2 : rnd();
    d += `M${px(g)} ${py(a - dip * (g > 2 ? 0.6 : 1) + (b - a) * r) + 0.5}h1`;
  }
  out += `<path d="${d}" stroke="${color}"/>`;
}
for (let i = 0; i <= 10; i++) {
  const label = i === 10 ? '500gB' : i * 50;
  out += `<text x="${px(i * 50)}" y="1425" text-anchor="middle">${label}</text>`;
  if (i) out += `<text x="635" y="${py(i * 5) + 4}" text-anchor="end">${i === 1 ? '5.00' : (i * 5).toFixed(1)}</text>`;
}
out += '<text x="638" y="1192">ms</text>';
document.getElementById('chart').innerHTML = out;
```
